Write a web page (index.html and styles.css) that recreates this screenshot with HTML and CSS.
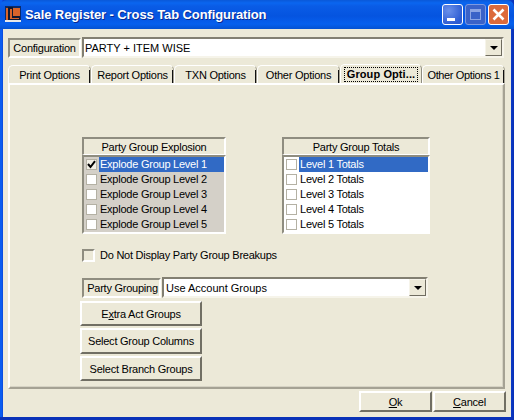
FILE: index.html
```html
<!DOCTYPE html>
<html lang="en">
<head>
<meta charset="utf-8">
<title>Sale Register - Cross Tab Configuration</title>
<link rel="stylesheet" href="styles.css">
</head>
<body>
<div class="window">
  <div class="titlebar">
    <svg class="appicon" width="16" height="16" viewBox="0 0 16 16"><rect width="16" height="16" fill="#0a2a6a"/><rect x="1" y="2" width="14" height="12" fill="#d8642a"/><path d="M3 1h5v9h7v4H3z" fill="#101830"/><path d="M5 3h2v9h7v1H5z" fill="#d8642a"/><rect y="14" width="16" height="2" fill="#e8e8e8"/></svg>
    <span class="title">Sale Register - Cross Tab Configuration</span>
    <div class="caps">
      <div class="cap cap-min"><span class="min-bar"></span></div>
      <div class="cap cap-max"><span class="max-box"></span></div>
      <div class="cap cap-close"><svg width="21" height="21" viewBox="0 0 21 21"><path d="M5.5 5.5l10 10M15.5 5.5l-10 10" stroke="#fff" stroke-width="2.6"/></svg></div>
    </div>
  </div>
  <div class="client">
    <div class="config-row">
      <div class="label label-config">Configuration</div>
      <div class="combo combo-config">
        <span class="combo-text">PARTY + ITEM WISE</span>
        <span class="drop"><i class="arrow"></i></span>
      </div>
    </div>
    <div class="tabs">
      <div class="tab t1">Print Options</div>
      <div class="tab t2">Report Options</div>
      <div class="tab t3">TXN Options</div>
      <div class="tab t4">Other Options</div>
      <div class="tab active t5"><span class="focus">Group Opti...</span></div>
      <div class="tab t6">Other Options 1</div>
    </div>
    <div class="panel">
      <div class="lists">
        <div class="listbox lb1">
          <div class="list-head">Party Group Explosion</div>
          <div class="list grey">
            <div class="row sel"><span class="chk checked"><svg width="9" height="9" viewBox="0 0 9 9"><path d="M1 4l2.5 3L8 1.2" fill="none" stroke="#000" stroke-width="2"/></svg></span><span class="row-text">Explode Group Level 1</span></div>
            <div class="row"><span class="chk"></span><span class="row-text">Explode Group Level 2</span></div>
            <div class="row"><span class="chk"></span><span class="row-text">Explode Group Level 3</span></div>
            <div class="row"><span class="chk"></span><span class="row-text">Explode Group Level 4</span></div>
            <div class="row"><span class="chk"></span><span class="row-text">Explode Group Level 5</span></div>
          </div>
        </div>
        <div class="listbox lb2">
          <div class="list-head">Party Group Totals</div>
          <div class="list white">
            <div class="row sel"><span class="chk"></span><span class="row-text">Level 1 Totals</span></div>
            <div class="row"><span class="chk"></span><span class="row-text">Level 2 Totals</span></div>
            <div class="row"><span class="chk"></span><span class="row-text">Level 3 Totals</span></div>
            <div class="row"><span class="chk"></span><span class="row-text">Level 4 Totals</span></div>
            <div class="row"><span class="chk"></span><span class="row-text">Level 5 Totals</span></div>
          </div>
        </div>
      </div>
      <div class="breakups"><span class="chk big"></span><span>Do Not Display Party Group Breakups</span></div>
      <div class="grouping">
        <div class="label label-group">Party Grouping</div>
        <div class="combo combo-group">
          <span class="combo-text">Use Account Groups</span>
          <span class="drop"><i class="arrow"></i></span>
        </div>
      </div>
      <div class="side-buttons">
        <div class="btn b-extra"><span>E<u>x</u>tra Act Groups</span></div>
        <div class="btn b-cols">Select Group Columns</div>
        <div class="btn b-branch">Select Branch Groups</div>
      </div>
    </div>
    <div class="footer">
      <div class="btn foot"><span><u>O</u>k</span></div>
      <div class="btn foot"><span><u>C</u>ancel</span></div>
    </div>
  </div>
</div>
</body>
</html>
```
FILE: styles.css
```css
* { box-sizing: border-box; }
html, body { margin: 0; padding: 0; }
body { width: 514px; height: 420px; overflow: hidden; background: #0a3fd0; font: 11px "Liberation Sans", Arial, sans-serif; letter-spacing: -.24px; color: #000; }
.window { width: 514px; height: 420px; display: flex; flex-direction: column; background: linear-gradient(90deg, #0a5cf0 0, #0a5cf0 2px, #0a3fd0 3px, #0a3fd0 510px, #0a2fb4 514px); border-bottom: 3px solid #0a32b8; }
.titlebar { height: 29px; flex: none; display: flex; align-items: center; padding: 0 5px; color: #fff;
  background: linear-gradient(180deg, #0a58d8 0, #0a66f0 3px, #0a5ce6 6px, #0554e0 16px, #0660ee 24px, #0452d2 29px); border-radius: 7px 7px 0 0; }
.appicon { flex: none; margin: 0 4px 1px 0; }
.title { font: bold 13px "Liberation Sans", Arial, sans-serif; letter-spacing: -.1px; text-shadow: 1px 1px 0 #0a2a90; white-space: nowrap; flex: 1; }
.caps { display: flex; gap: 2px; }
.cap { width: 21px; height: 21px; border: 1px solid #fff; border-radius: 3px; display: flex; }
.cap-min { background: radial-gradient(circle at 30% 30%, #6a90ea, #2d5cd2 75%); }
.cap-max { background: #3a62c8; border-color: #7d9ae0; }
.cap-close { background: #dc6a3c; }
.cap-close svg { margin: -1px; }
.min-bar { width: 8px; height: 3px; background: #fff; margin: 13px 0 0 4px; }
.max-box { width: 11px; height: 11px; border: 1px solid #8ba4e4; border-top-width: 3px; margin: 4px 0 0 4px; }
.client { flex: 1; margin: 0 3px; background: #ece9d8; padding: 8px 5px 0 5px; display: flex; flex-direction: column; min-height: 0; }
.label { display: flex; align-items: center; justify-content: center; border: 2px solid; border-color: #8f8d80 #fff #fff #8f8d80; white-space: nowrap; }
.label-config { width: 73px; height: 20px; margin-top: 1px; }
.combo { display: flex; align-items: center; background: #fff; border: 2px solid; border-color: #827f72 #f6f4ea #f6f4ea #827f72; padding-left: 1px; letter-spacing: 0; }
.combo-text { flex: 1; white-space: nowrap; }
.config-row { display: flex; gap: 1px; height: 21px; flex: none; }
.combo-config { width: 422px; height: 21px; }
.drop { width: 17px; height: 17px; background: #ece9d8; border: 1px solid; border-color: #f6f4ea #6f6c60 #6f6c60 #f6f4ea; display: flex; align-items: center; justify-content: center; }
.arrow { width: 0; height: 0; border-style: solid; border-width: 4px 4px 0; border-color: #000 transparent transparent; }
.tabs { display: flex; height: 18px; margin-top: 7px; flex: none; }
.tab { height: 18px; border-top: 1px solid #fff; border-left: 1px solid #fff; border-right: 1px solid #a5a294; border-radius: 5px 5px 0 0; display: flex; align-items: center; justify-content: center; white-space: nowrap; background: linear-gradient(#111, #111) right 4px / 1px 100% no-repeat #ece9d8; }
.t1 { width: 83px; } .t2 { width: 83px; } .t3 { width: 83px; } .t4 { width: 83px; } .t5 { width: 82px; } .t6 { width: 83px; }
.active { font-weight: bold; margin-top: -1px; height: 19px; letter-spacing: .1px; background: #ece9d8; border-color: #fff #8f8d80 #ece9d8 #fff; }
.t6 { letter-spacing: -.38px; }
.focus { border: 1px dotted #000; padding: 0 2px; line-height: 13px; }
.panel { width: 497px; height: 306px; flex: none; border: 2px solid; border-color: #fff #a5a294 #a5a294 #fff; padding: 52px 0 0 72px; display: flex; flex-direction: column; box-shadow: inset -1px -1px 0 #d6d3c4; }
.lists { display: flex; gap: 56px; }
.listbox { width: 144px; display: flex; flex-direction: column; }
.lb2 { width: 148px; }
.list-head { height: 18px; border: 2px solid; border-color: #8f8d80 #fff #fff #8f8d80; display: flex; align-items: center; justify-content: center; border-bottom-width: 1px; }
.list { height: 79px; border: 2px solid; border-color: #8f8d80 #fff #fff #8f8d80; }
.grey { background: #d4d0c8; }
.white { background: #fff; }
.row { height: 15px; display: flex; align-items: center; padding-left: 2px; white-space: nowrap; }
.row-text { flex: 1; height: 15px; line-height: 15px; padding-left: 1px; margin-left: 2px; }
.sel .row-text { background: #316ac5; color: #fff; }
.chk { width: 11px; height: 11px; flex: none; background: #fff; border: 1px solid #b4b1a4; display: flex; align-items: center; justify-content: center; }
.checked { background: #f2f0e6; }
.big { width: 13px; height: 13px; border: 2px solid; border-color: #8f8d80 #fff #fff #8f8d80; background: transparent; }
.breakups { display: flex; align-items: center; gap: 5px; margin-top: 14px; height: 14px; white-space: nowrap; }
.grouping { display: flex; gap: 1px; height: 21px; margin-top: 15px; }
.label-group { width: 79px; height: 20px; margin-top: 1px; padding-left: 2px; }
.combo-group { width: 266px; height: 21px; }
.combo-group .combo-text { padding-left: 1px; }
.side-buttons { display: flex; flex-direction: column; margin: 3px 0 0 -2px; width: 122px; gap: 2px; }
.btn { display: flex; align-items: center; justify-content: center; background: #ece9d8; border: 2px solid; border-color: #fff #716f64 #716f64 #fff; white-space: nowrap; }
.b-extra { height: 25px; } .b-cols { height: 26px; } .b-branch { height: 25px; }
.footer { display: flex; justify-content: flex-end; gap: 1px; margin-top: 2px; }
.foot { width: 73px; height: 21px; }
```
